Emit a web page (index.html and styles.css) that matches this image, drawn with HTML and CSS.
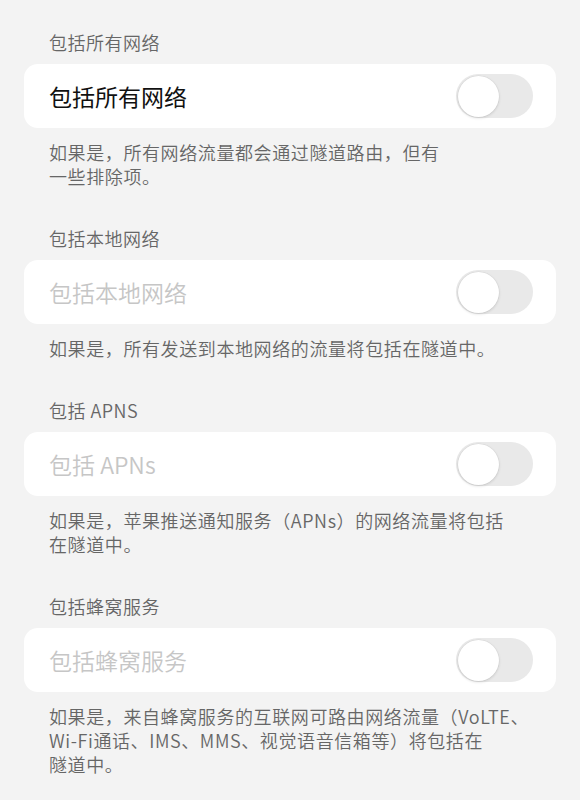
FILE: index.html
```html
<!DOCTYPE html>
<html lang="zh-CN">
<head>
    <meta charset="UTF-8">
    <meta name="viewport" content="width=device-width, initial-scale=1.0">
    <title>隧道设置</title>
    <link rel="stylesheet" href="styles.css">
</head>
<body>
    <main class="settings">
        <!-- 包括所有网络 -->
        <section class="group">
            <h2 class="group-title">包括所有网络</h2>
            <div class="row">
                <span class="row-label">包括所有网络</span>
                <span class="switch"><span class="knob"></span></span>
            </div>
            <p class="group-note">如果是，所有网络流量都会通过隧道路由，但有<br>一些排除项。</p>
        </section>

        <!-- 包括本地网络 -->
        <section class="group">
            <h2 class="group-title">包括本地网络</h2>
            <div class="row disabled">
                <span class="row-label">包括本地网络</span>
                <span class="switch"><span class="knob"></span></span>
            </div>
            <p class="group-note">如果是，所有发送到本地网络的流量将包括在隧道中。</p>
        </section>

        <!-- 包括 APNS -->
        <section class="group">
            <h2 class="group-title">包括 APNS</h2>
            <div class="row disabled">
                <span class="row-label">包括 APNs</span>
                <span class="switch"><span class="knob"></span></span>
            </div>
            <p class="group-note">如果是，苹果推送通知服务（APNs）的网络流量将包括<br>在隧道中。</p>
        </section>

        <!-- 包括蜂窝服务 -->
        <section class="group">
            <h2 class="group-title">包括蜂窝服务</h2>
            <div class="row disabled">
                <span class="row-label">包括蜂窝服务</span>
                <span class="switch"><span class="knob"></span></span>
            </div>
            <p class="group-note">如果是，来自蜂窝服务的互联网可路由网络流量（VoLTE、<br>Wi-Fi通话、IMS、MMS、视觉语音信箱等）将包括在<br>隧道中。</p>
        </section>
    </main>
</body>
</html>
```

FILE: styles.css
```css
* {
    margin: 0;
    padding: 0;
    box-sizing: border-box;
}

body {
    font-family: "Noto Sans CJK SC", "Noto Sans", sans-serif;
    background: #f3f3f3;
    color: #000;
}

.settings {
    padding: 30px 24px 0 24px;
}

/* Grupo de ajustes */
.group {
    margin-bottom: 38px;
}

.group-title {
    font-size: 18px;
    font-weight: 350;
    line-height: 24px;
    letter-spacing: 0.5px;
    color: #666;
    padding-left: 25px;
    margin-bottom: 10px;
}

.row {
    height: 64px;
    background: #fff;
    border-radius: 14px;
    display: flex;
    align-items: center;
    justify-content: space-between;
    padding: 0 23px 0 25px;
}

.row-label {
    font-size: 23px;
    font-weight: 400;
    color: #111;
}

.row.disabled .row-label {
    font-weight: 350;
    color: #c6c6c6;
}

/* Interruptor */
.switch {
    width: 77px;
    height: 44px;
    border-radius: 22px;
    background: #e9e9e9;
    display: flex;
    align-items: center;
    padding: 0 2px;
}

.knob {
    width: 41px;
    height: 41px;
    border-radius: 50%;
    background: #fff;
    box-shadow: 0 1px 3px rgba(0, 0, 0, 0.14), 0 0 0 0.5px rgba(0, 0, 0, 0.05);
}

.group-note {
    font-size: 18px;
    font-weight: 350;
    line-height: 24px;
    letter-spacing: 0.6px;
    color: #666;
    padding-left: 25px;
    margin-top: 12px;
}
```
